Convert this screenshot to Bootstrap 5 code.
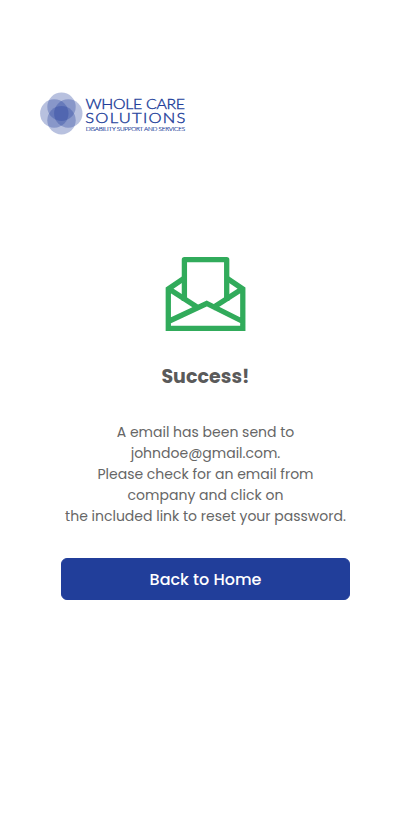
<!DOCTYPE html>
<html lang="en">
<head>
<meta charset="utf-8">
<meta name="viewport" content="width=device-width, initial-scale=1">
<title>Success</title>
<link href="https://cdn.jsdelivr.net/npm/bootstrap@5.3.0/dist/css/bootstrap.min.css" rel="stylesheet">
<style>
body{font-family:Poppins,Inter,sans-serif;color:#5a5a5a;min-height:823px}
.brand{padding:88px 0 0 36px}
.brand svg,.envelope{display:block}
.brand text{font-family:Lato,sans-serif;font-weight:300;fill:#213e9a;stroke:#213e9a;stroke-width:.38px}
.brand .tagline{stroke-width:.16px}
.panel{width:289px;padding-top:112px}
.title{font-size:19px;line-height:28px;margin-top:25px;letter-spacing:.05px}
.message{font-size:14px;line-height:21px;margin-top:31px;white-space:nowrap;color:#666}
.home-btn{--bs-btn-bg:#213e9a;--bs-btn-border-color:#213e9a;--bs-btn-hover-bg:#1b337f;height:42px;margin-top:31px;border-radius:6px;font-size:16px;line-height:24px;padding:8px 12px 6px}
</style>
</head>
<body class="bg-white">
<header class="brand">
<svg width="154" height="50" viewBox="36 88 154 50" role="img" aria-label="Whole Care Solutions">
<g fill="#213e9a" fill-opacity=".32"><circle cx="61.5" cy="106.7" r="14.2"/><circle cx="61.5" cy="120.3" r="14.2"/><circle cx="54.3" cy="113.5" r="14.2"/><circle cx="68.3" cy="113.5" r="14.2"/></g>
<g transform="translate(85.5 108.5) scale(1.1 1)"><text font-size="14.4" textLength="90.5">WHOLE CARE</text></g>
<g transform="translate(85.3 122.6) scale(1.15 1)"><text font-size="14.4" textLength="87">SOLUTIONS</text></g>
<g transform="translate(85.7 130.5) scale(1.18 1)"><text class="tagline" font-size="5.4" textLength="84.2">DISABILITY SUPPORT AND SERVICES</text></g>
</svg>
</header>
<main class="panel mx-auto d-flex flex-column align-items-center text-center">
<svg class="envelope" width="92" height="88" viewBox="160 250 92 88" fill="none" stroke="#31ab5b" stroke-width="5.3" aria-hidden="true">
<path d="M184.4 301V259.7H226.7V301" stroke-linejoin="round"/>
<path d="M184.5 278L168.3 289V328.4H242.8V289L226.6 278M168.3 288.5L198.5 308M242.8 288.5L212.5 308M168.3 321.5L206.7 303.5L242.8 321.5"/>
</svg>
<h1 class="title fw-bold mb-0">Success!</h1>
<p class="message mb-0">A email has been send to<br>johndoe@gmail.com.<br>Please check for an email from<br>company and click on<br>the included link to reset your password.</p>
<button type="button" class="btn btn-primary home-btn w-100 fw-medium">Back to Home</button>
</main>
<script src="https://cdn.jsdelivr.net/npm/bootstrap@5.3.0/dist/js/bootstrap.bundle.min.js"></script>
</body>
</html>
